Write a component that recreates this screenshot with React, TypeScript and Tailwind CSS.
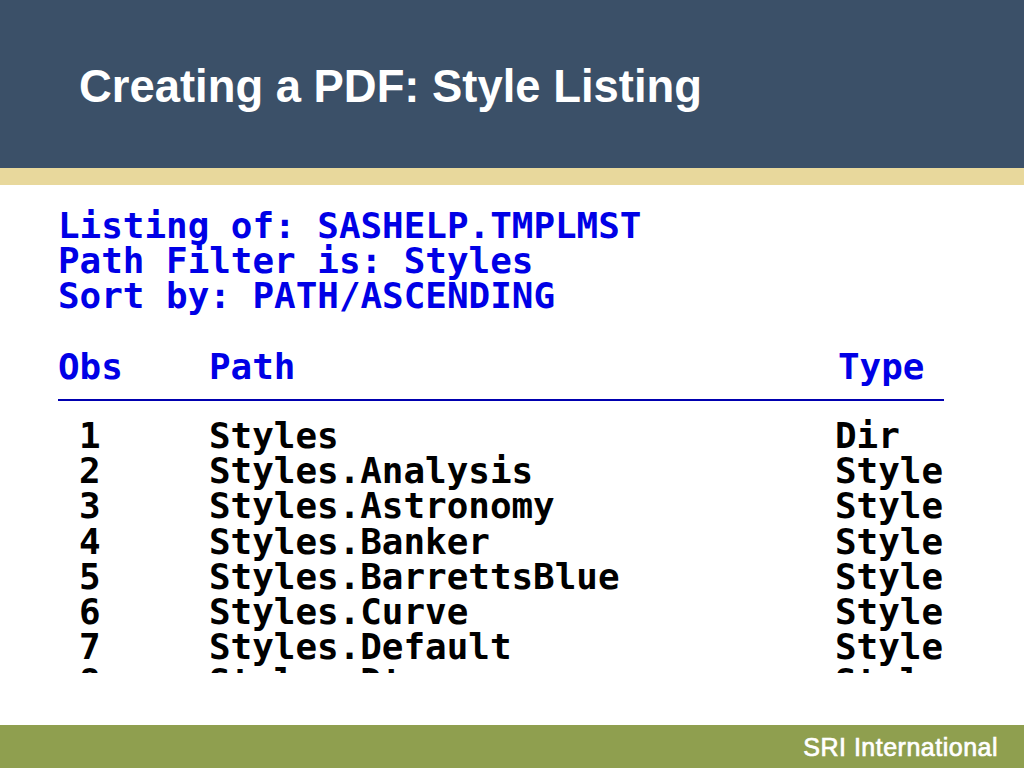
const rows = [
  ['1', 'Styles', 'Dir'],
  ['2', 'Styles.Analysis', 'Style'],
  ['3', 'Styles.Astronomy', 'Style'],
  ['4', 'Styles.Banker', 'Style'],
  ['5', 'Styles.BarrettsBlue', 'Style'],
  ['6', 'Styles.Curve', 'Style'],
  ['7', 'Styles.Default', 'Style'],
  ['8', 'Styles.Dtree', 'Style'],
]

export default function App() {
  return (
    <div className="w-[1024px] h-[768px] flex flex-col bg-white overflow-hidden font-['Liberation_Sans',sans-serif]">
      <header className="h-[168px] shrink-0 bg-[#3b5068] pl-[79px] pt-[58px]">
        <h1 className="text-[45.4px] leading-[57px] font-bold text-white">Creating a PDF: Style Listing</h1>
      </header>
      <div className="h-[17px] shrink-0 bg-[#e8d89c]" />
      <main className="flex-1 pl-[58px] pt-[23px] font-['DejaVu_Sans_Mono',monospace] text-[35.9px] leading-[35px] font-bold">
        <div className="text-[#0000e6]">
          <div>Listing of: SASHELP.TMPLMST</div>
          <div>Path Filter is: Styles</div>
          <div>Sort by: PATH/ASCENDING</div>
          <div className="flex mt-[36px]">
            <div className="w-[151px]">Obs</div>
            <div className="w-[629px]">Path</div>
            <div>Type</div>
          </div>
        </div>
        <div className="w-[886px] h-[2px] bg-[#0000b0] mt-[15px]" />
        <div className="h-[255px] mt-[17px] overflow-hidden text-black leading-[35.2px]">
          {rows.map((r) => (
            <div key={r[0]} className="flex">
              <div className="w-[151px] pl-[21px]">{r[0]}</div>
              <div className="w-[626px]">{r[1]}</div>
              <div>{r[2]}</div>
            </div>
          ))}
        </div>
      </main>
      <footer className="h-[43px] shrink-0 bg-[#8f9f4f] flex items-center justify-end pr-[26px]">
        <span className="text-[25px] leading-[28px] text-white tracking-[0.5px] [-webkit-text-stroke:0.7px_white]">SRI International</span>
      </footer>
    </div>
  )
}
